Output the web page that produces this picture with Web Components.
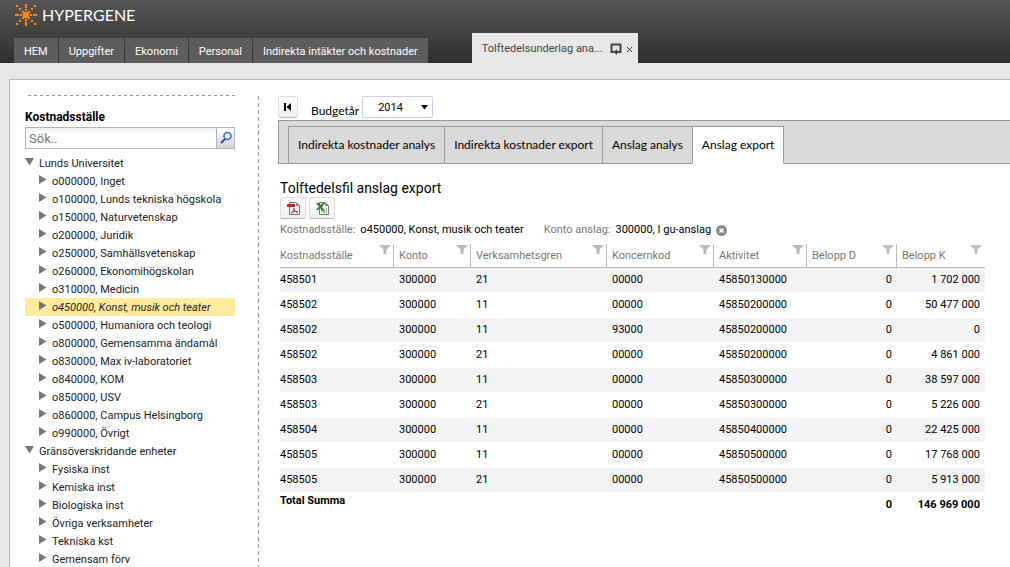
<!DOCTYPE html>
<html lang="sv">
<head>
<meta charset="utf-8">
<title>Hypergene</title>
<style>
html, body { height: 100%; margin: 0; }
body { overflow: hidden; background: #e8e8e8; color: #000; font: 11px/18px Roboto, "Liberation Sans", sans-serif; }
</style>
</head>
<body>
<hg-app></hg-app>
<script>
const define = (name, html, setup) => {
  const t = document.createElement('template');
  t.innerHTML = html;
  customElements.define(name, class extends HTMLElement {
    connectedCallback() {
      if (this.shadowRoot) return;
      const root = this.attachShadow({ mode: 'open' });
      root.append(t.content.cloneNode(true));
      if (setup) setup(root, this);
    }
  });
};

define('hg-logo', `
<style>
:host { display: flex; align-items: center; gap: 4px; color: #fff; font: 16px/24px Lato, sans-serif; }
svg { display: block; }
</style>
<svg width="24" height="24" viewBox="0 0 24 24" fill="#f58a1f" aria-hidden="true"></svg>
<span>HYPERGENE</span>`, root => {
  let s = '<rect x="9" y="9" width="6" height="6" rx="1"/>';
  // each ray is three dots stepping out from the centre square
  const place = (dir, d) => dir > 0 ? 12 + d : dir < 0 ? 10 - d : 11;
  for (const dx of [-1, 0, 1]) for (const dy of [-1, 0, 1]) {
    if (!dx && !dy) continue;
    for (const d of dx && dy ? [2, 5, 8] : [4, 7, 9]) {
      s += '<rect x="' + place(dx, d) + '" y="' + place(dy, d) + '" width="2" height="2" rx="0.300" stroke="#f58a1f" stroke-opacity="0.400" stroke-width="0.600"/>';
    }
  }
  root.querySelector('svg').innerHTML = s;
});

define('hg-header', `
<style>
:host { display: flex; flex-direction: column; justify-content: space-between; height: 60px; padding: 3px 14px 0; background: linear-gradient(#555, #2f2f2f); }
.bar { display: flex; align-items: flex-end; gap: 44px; }
nav { display: flex; gap: 1px; }
nav a { padding: 2px 10px 0; background: #5d5d5d; color: #fff; line-height: 23px; text-decoration: none; }
.open { display: flex; align-items: center; gap: 4px; height: 28px; padding: 2px 5px 0 10px; background: #e8e8e8; }
.open a { width: 124px; color: #444; text-decoration: none; white-space: nowrap; }
button { padding: 0; border: 0; background: none; display: block; }
svg { display: block; }
</style>
<hg-logo></hg-logo>
<div class="bar">
<nav><a href="#">HEM</a><a href="#">Uppgifter</a><a href="#">Ekonomi</a><a href="#">Personal</a><a href="#">Indirekta intäkter och kostnader</a></nav>
<div class="open"><a href="#">Tolftedelsunderlag ana...</a>
<button aria-label="Ladda om"><svg width="12" height="12" viewBox="0 0 12 12"><path d="M4 9H1.500V1.500H10.500V9H6" fill="none" stroke="#444" stroke-width="2"/><path d="M7 6V12L3.500 9z" fill="#444"/></svg></button>
<button aria-label="Stäng"><svg width="7" height="7" viewBox="0 0 7 7"><path d="M1 1l5 5M6 1L1 6" stroke="#333"/></svg></button></div>
</div>`);

define('hg-search', `
<style>
:host { display: block; }
label { display: block; font-size: 12px; font-weight: bold; line-height: 20px; }
.box { display: flex; border: 1px solid #b0b3cd; height: 20px; }
input { flex: 1; min-width: 0; border: 0; padding: 2px 3px 0; font: 13px/18px Roboto, sans-serif; outline: 0; background: linear-gradient(#eef0f3, #fff 6px); }
input::placeholder { color: #777; opacity: 1; }
button { width: 18px; padding: 0; border: 0; border-left: 1px solid #b0b3cd; background: linear-gradient(#fff, #d4d4d4); }
svg { display: block; margin: 0 auto; }
</style>
<label for="q">Kostnadsställe</label>
<div class="box"><input id="q" type="text" placeholder="Sök.."><button aria-label="Sök"><svg width="14" height="14" viewBox="0 0 14 14"><circle cx="8.500" cy="5" r="3.500" fill="#e3eefb" stroke="#3c6fb4" stroke-width="1.600"/><path d="M6 8L2 12" stroke="#2c5290" stroke-width="2.200"/></svg></button></div>`);

define('hg-node', `
<style>
:host { display: flex; align-items: flex-start; height: 18px; padding-left: 14px; gap: 5px; color: #222; line-height: 20px; white-space: nowrap; }
:host([open]) { padding-left: 0; }
:host([selected]) { background: #ffeb9c; font-style: italic; }
svg { display: block; flex: none; width: 8px; height: 9px; margin-top: 3px; fill: #777; }
.down { display: none; width: 9px; height: 8px; margin-top: 4px; }
:host([open]) .right { display: none; }
:host([open]) .down { display: block; }
</style>
<svg class="right" viewBox="0 0 8 9"><path d="M0 0L7.500 4.500 0 9z"/></svg>
<svg class="down" viewBox="0 0 9 8"><path d="M0 0H9L4.500 7.500z"/></svg>
<slot></slot>`);

define('hg-sidebar', `
<style>
:host { display: block; width: 210px; flex: none; padding: 15px 23px 0 15px; }
.rule { height: 1px; margin: 0 0 11px 3px; background: repeating-linear-gradient(90deg, #999 0 3px, transparent 3px 6px); }
.tree { margin-top: 5px; }
</style>
<div class="rule"></div>
<hg-search></hg-search>
<div class="tree"></div>`, root => {
  const tree = root.querySelector('.tree');
  const add = (text, attr) => {
    const n = document.createElement('hg-node');
    if (attr) n.setAttribute(attr, '');
    n.textContent = text;
    tree.append(n);
  };
  add('Lunds Universitet', 'open');
  ['o000000, Inget', 'o100000, Lunds tekniska högskola', 'o150000, Naturvetenskap', 'o200000, Juridik', 'o250000, Samhällsvetenskap', 'o260000, Ekonomihögskolan', 'o310000, Medicin', 'o450000, Konst, musik och teater', 'o500000, Humaniora och teologi', 'o800000, Gemensamma ändamål', 'o830000, Max iv-laboratoriet', 'o840000, KOM', 'o850000, USV', 'o860000, Campus Helsingborg', 'o990000, Övrigt'].forEach(t => add(t, t.startsWith('o450000') ? 'selected' : ''));
  add('Gränsöverskridande enheter', 'open');
  ['Fysiska inst', 'Kemiska inst', 'Biologiska inst', 'Övriga verksamheter', 'Tekniska kst', 'Gemensam förv'].forEach(t => add(t));
});

define('hg-tool', `
<style>
:host { display: block; }
button { display: flex; align-items: center; justify-content: center; width: 26px; height: 22px; padding: 0; border: 1px solid #ddd; border-bottom-color: #bbb; border-radius: 3px; background: linear-gradient(#fff, #f0f0f0); }
:host([narrow]) button { width: 20px; }
</style>
<button><slot></slot></button>`, (root, host) => root.querySelector('button').setAttribute('aria-label', host.getAttribute('label')));

define('hg-toolbar', `
<style>
:host { display: flex; align-items: center; height: 22px; }
label { margin: 8px 3px 0 13px; font: 12px/18px Lato, sans-serif; }
.pick { position: relative; }
select { display: block; appearance: none; width: 71px; height: 22px; padding: 2px 0 0 15px; border: 1px solid #c9cfe0; border-radius: 2px; background: #fff; color: #000; font: 11px/18px Roboto, sans-serif; }
.pick svg { position: absolute; right: 5px; top: 9px; pointer-events: none; }
svg { display: block; }
</style>
<hg-tool narrow label="Första sidan"><svg width="8" height="8" viewBox="0 0 8 8"><path d="M0 0h2v8H0zM7 0v8L2.500 4z"/></svg></hg-tool>
<label for="year">Budgetår</label>
<div class="pick"><select id="year"><option>2014</option></select><svg width="7" height="5" viewBox="0 0 7 5"><path d="M0 0h7L3.500 4.500z"/></svg></div>`);

define('hg-tabs', `
<style>
:host { display: flex; padding: 5px 0 0 9px; border: solid #999; border-width: 1px 0 0 1px; background: linear-gradient(#999, #999) bottom / 100% 1px no-repeat #d9d9d9; }
button { height: 38px; padding: 0 9px; border: solid #999; border-width: 1px 0 1px 1px; background: #d9d9d9; font: 12px/36px Lato, sans-serif; color: #000; white-space: nowrap; }
button[aria-selected=true] { border-right-width: 1px; border-bottom-color: #fff; background: #fff; }
</style>
<button role="tab">Indirekta kostnader analys</button><button role="tab">Indirekta kostnader export</button><button role="tab">Anslag analys</button><button role="tab" aria-selected="true">Anslag export</button>`);

define('hg-filters', `
<style>
:host { display: flex; align-items: center; gap: 5px; height: 18px; color: #777; white-space: nowrap; }
b { font-weight: normal; color: #000; }
b + span { margin-left: 15px; }
button { padding: 0; border: 0; background: none; }
svg { display: block; }
</style>
<span>Kostnadsställe:</span><b>o450000, Konst, musik och teater</b><span>Konto anslag:</span><b>300000, I gu-anslag</b>
<button aria-label="Ta bort filter"><svg width="11" height="11" viewBox="0 0 11 11"><circle cx="5.500" cy="5.500" r="5.500" fill="#888"/><path d="M3.500 3.500l4 4M7.500 3.500l-4 4" stroke="#fff" stroke-width="1.500"/></svg></button>`);

define('hg-table', `
<style>
:host { display: block; }
table { width: 705px; table-layout: fixed; border-collapse: separate; border-spacing: 0; }
th, td { padding: 0 5px; text-align: left; font-weight: normal; }
th:first-child, td:first-child { padding-left: 0; }
th { padding-right: 3px; border-bottom: 1px solid #bbb; color: #777; vertical-align: top; background: linear-gradient(#bbb, #bbb) right / 1px 100% no-repeat; }
th:last-child { background: none; }
th div { display: flex; justify-content: space-between; height: 23px; line-height: 24px; }
th svg { display: block; margin-top: 1px; }
tbody td { height: 24px; line-height: 24px; border-bottom: 1px solid #fff; }
tbody tr:nth-child(odd) td { background: #f4f4f4; background-clip: padding-box; }
td.n { text-align: right; }
tfoot td { height: 24px; vertical-align: middle; font-weight: bold; }
tfoot td:first-child { vertical-align: top; line-height: 16px; }
</style>
<table><colgroup></colgroup><thead><tr></tr></thead><tbody></tbody>
<tfoot><tr><td>Total Summa</td><td></td><td></td><td></td><td></td><td class="n">0</td><td class="n">146 969 000</td></tr></tfoot></table>`, root => {
  const q = s => root.querySelector(s);
  q('colgroup').innerHTML = [114, 77, 136, 107, 93, 90, 88].map(w => '<col style="width:' + w + 'px">').join('');
  q('thead tr').innerHTML = ['Kostnadsställe', 'Konto', 'Verksamhetsgren', 'Koncernkod', 'Aktivitet', 'Belopp D', 'Belopp K'].map(t =>
    '<th><div>' + t + '<svg width="12" height="9" viewBox="0 0 12 9" fill="#bbb"><path d="M0 0H12L7.500 4.500V9H4.500V4.500z"/></svg></div></th>').join('');
  q('tbody').innerHTML = [['458501', '21', '00000', '1 702 000'], ['458502', '11', '00000', '50 477 000'], ['458502', '11', '93000', '0'], ['458502', '21', '00000', '4 861 000'], ['458503', '11', '00000', '38 597 000'], ['458503', '21', '00000', '5 226 000'], ['458504', '11', '00000', '22 425 000'], ['458505', '11', '00000', '17 768 000'], ['458505', '21', '00000', '5 913 000']].map((r, i) =>
    '<tr><td>' + r[0] + '</td><td>300000</td><td>' + r[1] + '</td><td>' + r[2] + '</td><td>' + r[0] + (i ? '00000' : '30000') + '</td><td class="n">0</td><td class="n">' + r[3] + '</td></tr>').join('');
});

define('hg-report', `
<style>
:host { display: block; flex: 1; min-width: 0; padding: 16px 0 0 20px; background: repeating-linear-gradient(#999 0 4px, transparent 4px 7px) 0 16px / 1px 100% no-repeat; }
hg-tabs { margin-top: 2px; }
h1 { margin: 15px 0 0; font-size: 14px; line-height: 18px; font-weight: normal; }
.body { padding-left: 2px; }
.tools { display: flex; gap: 3px; }
hg-filters { margin-top: 2px; }
hg-table { margin-top: 5px; }
</style>
<hg-toolbar></hg-toolbar>
<hg-tabs role="tablist"></hg-tabs>
<div class="body">
<h1>Tolftedelsfil anslag export</h1>
<div class="tools">
<hg-tool label="Exportera till PDF"><svg width="13" height="13" viewBox="0 0 13 13"><path d="M2.500.5H9L12.500 4V12.500H2.500z" fill="#fff" stroke="#777"/><path d="M9 0v4h4z" fill="#888"/><path d="M0 2h8v3H0z" fill="#d81f1f"/><path d="M4 11c2-1 3-3 3-5 0 3 2 4 4 4-3-1-5 0-7 1z" fill="none" stroke="#d81f1f"/></svg></hg-tool>
<hg-tool label="Exportera till Excel"><svg width="13" height="13" viewBox="0 0 13 13"><path d="M3.500.5H9L12.500 4V12.500H3.500z" fill="#fff" stroke="#777"/><path d="M9 0v4h4z" fill="#888"/><path d="M5 10h6M8 7v5M10.500 6v6" stroke="#aaa"/><path d="M0 1h3l1.500 2L7 1h2L6 5l3 4H6L4 6 2 8H0l3-3.500z" fill="#25802b"/></svg></hg-tool>
</div>
<hg-filters></hg-filters>
<hg-table></hg-table>
</div>`);

define('hg-app', `
<style>
:host { display: flex; flex-direction: column; min-height: 100%; }
main { display: flex; flex: 1; margin: 16px 0 0 9px; border: solid #b5b5b5; border-width: 1px 0 0 1px; background: #fff; }
</style>
<hg-header></hg-header>
<main><hg-sidebar></hg-sidebar><hg-report></hg-report></main>`);
</script>
</body>
</html>
